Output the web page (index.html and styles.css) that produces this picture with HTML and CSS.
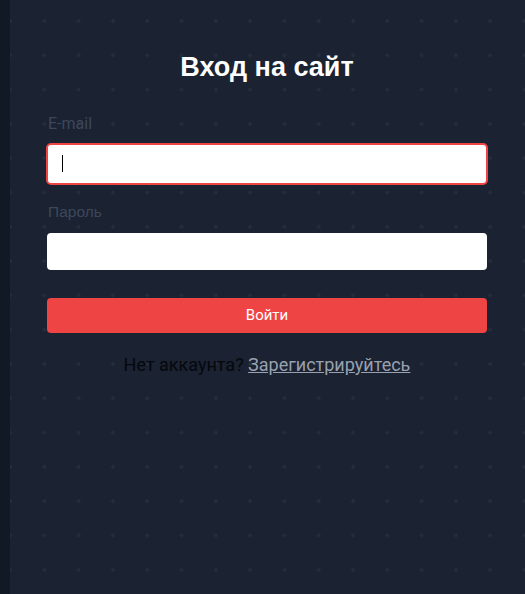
FILE: index.html
```html
<!DOCTYPE html>
<html lang="ru">
<head>
<meta charset="utf-8">
<title>Вход на сайт</title>
<link rel="stylesheet" href="styles.css">
</head>
<body>
<div class="layout">
  <aside class="strip"></aside>
  <main class="main">
    <form class="login">
      <h1 class="title">Вход на сайт</h1>
      <label class="label">E-mail</label>
      <div class="field field-focus"><span class="caret"></span></div>
      <label class="label label-2">Пароль</label>
      <div class="field"></div>
      <div class="btn">Войти</div>
      <p class="register">Нет аккаунта? <a class="link" href="#">Зарегистрируйтесь</a></p>
    </form>
  </main>
</div>
</body>
</html>
```

FILE: styles.css
```css
html, body {
  margin: 0;
  padding: 0;
  height: 100%;
}
body {
  background: #1b2231;
  font-family: Roboto, "Liberation Sans", sans-serif;
}
.layout {
  display: flex;
  height: 594px;
}
.strip {
  width: 10px;
  background: #111826;
  flex: none;
}
.main {
  flex: 1;
  background-color: #1b2231;
  background-image: radial-gradient(circle at 2px 2px, #252e3d 1.4px, transparent 2.2px);
  background-size: 34.3px 34.3px;
  background-position: -2px 19px;
}
.login {
  width: 440px;
  margin: 0 0 0 37px;
  padding-top: 50px;
  display: flex;
  flex-direction: column;
}
.title {
  margin: 0 0 30px;
  font-family: "Liberation Sans", Arial, sans-serif;
  font-weight: 700;
  font-size: 27px;
  line-height: 34px;
  color: #ffffff;
  text-align: center;
}
.label {
  font-size: 16px;
  line-height: 20px;
  color: #3b485c;
  padding-left: 1px;
  margin-bottom: 9px;
}
.label-2 {
  font-family: "Liberation Sans", Arial, sans-serif;
  font-size: 15.5px;
  margin-top: 17px;
  margin-bottom: 11px;
}
.field {
  height: 37px;
  background: #ffffff;
  border-radius: 4px;
  box-sizing: border-box;
  position: relative;
}
.field-focus {
  height: 42px;
  margin: 0 -1px;
  border: 2px solid #ef4444;
  border-radius: 5px;
}
.caret {
  position: absolute;
  left: 14px;
  top: 10px;
  width: 1px;
  height: 17px;
  background: #000;
}
.btn {
  margin-top: 28px;
  height: 35px;
  background: #ef4444;
  border-radius: 4px;
  color: #ffffff;
  font-size: 15px;
  line-height: 35px;
  text-align: center;
}
.register {
  margin: 21px 0 0;
  text-align: center;
  font-size: 18px;
  line-height: 22px;
  color: #05080d;
}
.link {
  color: #98a1b0;
  text-decoration: underline;
}
```
